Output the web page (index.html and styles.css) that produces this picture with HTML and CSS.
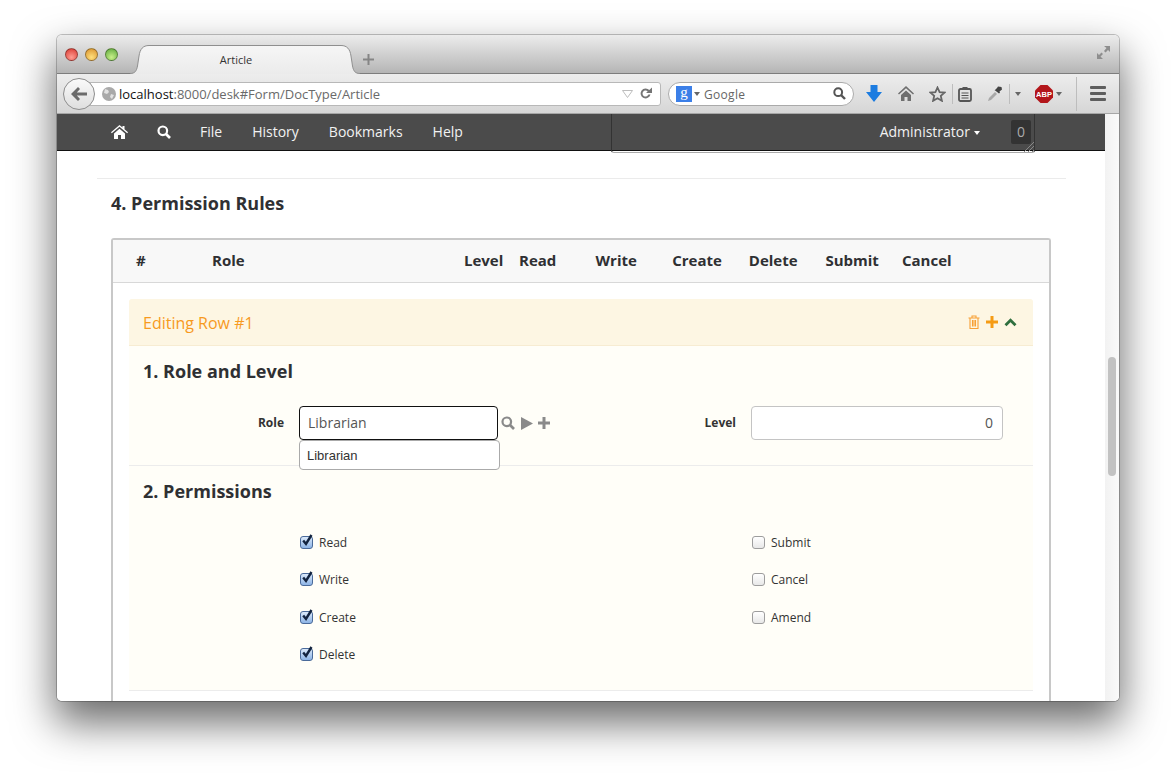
FILE: index.html

```html
<!DOCTYPE html>
<html lang="en">
<head>
    <meta charset="UTF-8">
    <title>Article</title>
    <link rel="stylesheet" href="styles.css">
</head>
<body>
    <div class="window">
        <div class="titlebar">
            <div class="lights">
                <span class="light red"></span>
                <span class="light yellow"></span>
                <span class="light green"></span>
            </div>
            <div class="tab">
                <svg class="tab-shape" width="230" height="29" viewBox="0 0 230 29">
                    <defs><linearGradient id="tabfill" x1="0" y1="0" x2="0" y2="1"><stop offset="0" stop-color="#f6f6f6"/><stop offset="1" stop-color="#ebebeb"/></linearGradient></defs>
                    <path d="M0 28.500C5 28.500 6.500 26 7.500 21L9 11C10 4 13 .5 19 .5H211C217 .5 220 4 221 11L222.500 21C223.500 26 225 28.500 230 28.500V29H0z" fill="url(#tabfill)"/>
                    <path d="M0 28.500C5 28.500 6.500 26 7.500 21L9 11C10 4 13 .5 19 .5H211C217 .5 220 4 221 11L222.500 21C223.500 26 225 28.500 230 28.500" fill="none" stroke="#8f8f8f"/>
                </svg>
                <span class="tab-title">Article</span>
            </div>
            <svg class="new-tab" width="11" height="11" viewBox="0 0 11 11"><path d="M4.500 0h2v4.500h4.500v2h-4.500v4.500h-2v-4.500h-4.500v-2h4.500z" fill="#858585"/></svg>
            <svg class="fullscreen" width="15" height="15" viewBox="0 0 15 15"><path d="M8 1h6v6l-2-2-2.500 2.500-1.500-1.500L10.500 3zM7 14H1V8l2 2 2.500-2.500L7 9l-2.500 2.500z" fill="#8e8e8e"/></svg>
        </div>

        <div class="toolbar">
            <div class="back">
                <svg width="18" height="16" viewBox="0 0 18 16"><path d="M8 1l2 2-3.200 3.400H17v3.200H6.800L10 13l-2 2-7-7z" fill="#6b6b6b"/></svg>
            </div>
            <div class="urlbar">
                <svg class="globe" width="14" height="14" viewBox="0 0 14 14"><circle cx="7" cy="7" r="7" fill="#a9a9a9"/><path d="M3 2l3 1 1 2-2 2-3-1zM9 7l3 1-2 4-2-2z" fill="#e2e2e2"/></svg>
                <span class="url"><b>localhost</b>:8000/desk#Form/DocType/Article</span>
                <svg class="url-drop" width="11" height="8" viewBox="0 0 11 8"><path d="M.5.500h10L5.500 7.500z" fill="none" stroke="#bdbdbd"/></svg>
                <svg class="reload" width="13" height="13" viewBox="0 0 13 13"><path d="M10.300 3A5 5 0 1 0 11.500 7.500H9.400A3 3 0 1 1 8.700 4.400L7 6h6V.500z" fill="#757575"/></svg>
            </div>
            <div class="searchbar">
                <span class="g-logo">g</span>
                <span class="caret grey"></span>
                <span class="search-text">Google</span>
                <svg width="13" height="13" viewBox="0 0 13 13"><circle cx="5.200" cy="5.200" r="3.900" fill="none" stroke="#555" stroke-width="2"/><path d="M8 8l4 4" stroke="#555" stroke-width="2.400"/></svg>
            </div>
            <svg class="tool-download" width="16" height="17" viewBox="0 0 16 17"><path d="M4.500 0h7v7H16l-8 10L0 7h4.500z" fill="#1c7ce0"/></svg>
            <svg class="tool-home" width="16" height="15" viewBox="0 0 16 15"><path d="M8 0l8 7.500-1 1L8 2.200 1 8.500l-1-1zM3 9l5-4.500L13 9v6H9.500v-4h-3v4H3z" fill="#6f6f6f"/></svg>
            <svg class="tool-star" width="17" height="16" viewBox="0 0 17 16"><path d="M8.500 1.500l2.100 4.600 4.900.5-3.700 3.300 1.100 4.900-4.400-2.600-4.400 2.600 1.100-4.900L1.500 6.600l4.900-.5z" fill="none" stroke="#666" stroke-width="1.800"/></svg>
            <span class="tool-sep"></span>
            <svg class="tool-clip" width="14" height="16" viewBox="0 0 14 16"><rect x="1" y="3" width="12" height="12" rx="1.500" fill="none" stroke="#555" stroke-width="1.800"/><rect x="4.500" y="1" width="5" height="3" fill="#555"/><path d="M3.500 7h7M3.500 9.500h7M3.500 12h7" stroke="#555" stroke-width="1.200"/></svg>
            <svg class="tool-dropper" width="16" height="16" viewBox="0 0 16 16"><path d="M1 15l1-3 6-6 2 2-6 6z" fill="#a8a8a8"/><path d="M8 4l2-2 1-1.500L14.500 1l.5 2.500-2.500 2 .5 1-1 1-4.500-3.500z" fill="#444"/></svg>
            <span class="tool-sep short"></span>
            <span class="caret grey tool-caret"></span>
            <svg class="tool-abp" width="18" height="18" viewBox="0 0 18 18"><path d="M5.500 0h7L18 5.500v7L12.500 18h-7L0 12.500v-7z" fill="#b3161b"/><text x="9" y="11.800" class="abp-text" text-anchor="middle">ABP</text></svg>
            <span class="caret grey abp-caret"></span>
            <span class="tool-sep tall"></span>
            <div class="menu-btn"><span></span><span></span><span></span></div>
        </div>

        <div class="viewport">
            <div class="page">
                <div class="navbar">
                    <svg class="nav-home" width="17" height="14" viewBox="0 0 17 14"><path d="M8.500 0l3 2.600V1h2v3.300L17 7.300l-.8.900L8.500 1.700.8 8.200 0 7.300zM3 8.500l5.500-4.700L14 8.500V14h-4V10H7v4H3z" fill="#fff"/></svg>
                    <svg class="nav-search" width="14" height="14" viewBox="0 0 14 14"><circle cx="5.800" cy="5.800" r="4.300" fill="none" stroke="#fff" stroke-width="2.200"/><path d="M9 9l4 4" stroke="#fff" stroke-width="2.600"/></svg>
                    <span class="nav-link first">File</span>
                    <span class="nav-link">History</span>
                    <span class="nav-link">Bookmarks</span>
                    <span class="nav-link">Help</span>
                    <span class="nav-user">Administrator<span class="caret white"></span></span>
                    <span class="nav-badge">0</span>
                    <div class="nav-textarea">
                        <svg class="grip" width="11" height="11" viewBox="0 0 11 11"><path d="M1 11L11 1M5 11l6-6M9 11l2-2" stroke="#888" stroke-width="1"/></svg>
                    </div>
                </div>

                <div class="content">
                    <div class="section-line"></div>
                    <h3 class="section-title">4. Permission Rules</h3>
                    <div class="grid-box">
                        <div class="grid-head">
                            <span class="col-no">#</span>
                            <span class="col-role">Role</span>
                            <span class="col-level">Level</span>
                            <span class="col-perm">Read</span>
                            <span class="col-perm">Write</span>
                            <span class="col-perm">Create</span>
                            <span class="col-perm">Delete</span>
                            <span class="col-perm">Submit</span>
                            <span class="col-perm">Cancel</span>
                        </div>
                        <div class="edit-panel">
                            <div class="edit-head">
                                <span class="edit-title">Editing Row #1</span>
                                <svg width="12" height="14" viewBox="0 0 12 14"><path d="M.5 3h11M4 3V1h4v2M2 3v10.500h8V3M4.500 5v6.500M6 5v6.500M7.500 5v6.500" fill="none" stroke="#f7a035" stroke-width="1.100"/></svg>
                                <svg class="edit-plus" width="12" height="12" viewBox="0 0 12 12"><path d="M4.500 0h3v4.500H12v3H7.500V12h-3V7.500H0v-3h4.500z" fill="#f59b14"/></svg>
                                <svg width="13" height="9" viewBox="0 0 13 9"><path d="M1.500 7.300L6.500 2.300l5 5" fill="none" stroke="#2f6f3e" stroke-width="2.800"/></svg>
                            </div>
                            <div class="edit-section">
                                <h4 class="edit-heading">1. Role and Level</h4>
                                <div class="form-cols role-row">
                                    <div class="field">
                                        <label class="field-label">Role</label>
                                        <div class="link-input">
                                            <input class="text-input focused" type="text" value="Librarian">
                                            <ul class="suggest"><li>Librarian</li></ul>
                                        </div>
                                        <svg class="link-search" width="14" height="14" viewBox="0 0 14 14"><circle cx="5.800" cy="5.800" r="4.300" fill="none" stroke="#8a8a8a" stroke-width="2.200"/><path d="M9 9l4 4" stroke="#8a8a8a" stroke-width="2.600"/></svg>
                                        <svg class="link-open" width="12" height="13" viewBox="0 0 12 13"><path d="M0 0l12 6.500L0 13z" fill="#8a8a8a"/></svg>
                                        <svg class="link-add" width="12" height="12" viewBox="0 0 12 12"><path d="M4.500 0h3v4.500H12v3H7.500V12h-3V7.500H0v-3h4.500z" fill="#8a8a8a"/></svg>
                                    </div>
                                    <div class="field">
                                        <label class="field-label">Level</label>
                                        <input class="text-input level" type="text" value="0">
                                    </div>
                                </div>
                            </div>
                            <div class="edit-section perms">
                                <h4 class="edit-heading">2. Permissions</h4>
                                <div class="form-cols">
                                    <div class="check-col">
                                        <div class="check-row"><span class="box on"><svg width="14" height="14" viewBox="0 0 14 14"><path d="M3.200 6.500l2.800 3.500L11.500 1" fill="none" stroke="#12233f" stroke-width="2.400"/></svg></span>Read</div>
                                        <div class="check-row"><span class="box on"><svg width="14" height="14" viewBox="0 0 14 14"><path d="M3.200 6.500l2.800 3.500L11.500 1" fill="none" stroke="#12233f" stroke-width="2.400"/></svg></span>Write</div>
                                        <div class="check-row"><span class="box on"><svg width="14" height="14" viewBox="0 0 14 14"><path d="M3.200 6.500l2.800 3.500L11.500 1" fill="none" stroke="#12233f" stroke-width="2.400"/></svg></span>Create</div>
                                        <div class="check-row"><span class="box on"><svg width="14" height="14" viewBox="0 0 14 14"><path d="M3.200 6.500l2.800 3.500L11.500 1" fill="none" stroke="#12233f" stroke-width="2.400"/></svg></span>Delete</div>
                                    </div>
                                    <div class="check-col">
                                        <div class="check-row"><span class="box"></span>Submit</div>
                                        <div class="check-row"><span class="box"></span>Cancel</div>
                                        <div class="check-row"><span class="box"></span>Amend</div>
                                    </div>
                                </div>
                            </div>
                        </div>
                    </div>
                </div>
            </div>
            <div class="scrollbar"><div class="thumb"></div></div>
        </div>
    </div>
</body>
</html>
```

FILE: styles.css

```css
html, body {
    margin: 0;
    padding: 0;
    height: 780px;
    overflow: hidden;
    background-color: #fff;
}

body {
    font-family: "Open Sans", Arial, sans-serif;
    color: #36393d;
    padding-top: 35px;
    padding-left: 57px;
    box-sizing: border-box;
}

.window {
    width: 1062px;
    height: 666px;
    border-radius: 5px;
    overflow: hidden;
    display: flex;
    flex-direction: column;
    box-shadow: 0 20px 42px 2px rgba(0, 0, 0, 0.58), 0 0 0 1px rgba(0, 0, 0, 0.22);
}

/* browser chrome */
.titlebar {
    height: 39px;
    flex: none;
    box-sizing: border-box;
    background: linear-gradient(#ececec, #b5b5b5);
    border-bottom: 1px solid #7d7d7d;
    display: flex;
    align-items: flex-end;
}

.lights {
    display: flex;
    gap: 7px;
    align-self: flex-start;
    margin: 13px 0 0 8px;
}

.light {
    width: 13px;
    height: 13px;
    border-radius: 50%;
    box-sizing: border-box;
    border: 1px solid rgba(0, 0, 0, 0.35);
}

.red { background: radial-gradient(circle at 50% 75%, #ff9d92, #d9362e); }
.yellow { background: radial-gradient(circle at 50% 75%, #ffe07c, #d9902a); }
.green { background: radial-gradient(circle at 50% 75%, #c9f08a, #5ba73a); }

.tab {
    width: 230px;
    height: 29px;
    margin-left: 12px;
    margin-bottom: -1px;
    padding-right: 18px;
    box-sizing: border-box;
    position: relative;
    text-align: center;
    font-size: 11px;
    line-height: 30px;
    color: #333;
}

.tab-shape {
    position: absolute;
    left: 0;
    top: 0;
}

.tab-title {
    position: relative;
}

.new-tab {
    margin: 0 0 8px 3px;
}

.fullscreen {
    margin: 0 8px 13px auto;
}

.toolbar {
    height: 40px;
    flex: none;
    box-sizing: border-box;
    padding-left: 6px;
    background: linear-gradient(#ededed, #d6d6d6);
    border-bottom: 1px solid #a6a6a6;
    display: flex;
    align-items: center;
}

.back {
    width: 32px;
    height: 32px;
    box-sizing: border-box;
    border-radius: 50%;
    border: 1px solid #8d8d8d;
    background: linear-gradient(#fafafa, #dedede);
    display: flex;
    align-items: center;
    justify-content: center;
    position: relative;
    z-index: 1;
}

.urlbar {
    width: 581px;
    height: 24px;
    margin-left: -15px;
    padding: 0 8px 0 21px;
    box-sizing: border-box;
    background-color: #fff;
    border: 1px solid #b8b8b8;
    border-radius: 0 3px 3px 0;
    display: flex;
    align-items: center;
}

.globe {
    flex: none;
}

.url {
    font-size: 13px;
    margin-left: 3px;
    color: #6a6a6a;
    flex: 1;
    white-space: nowrap;
}

.url b {
    font-weight: 400;
    color: #111;
}

.url-drop {
    margin-right: 6px;
}

.searchbar {
    width: 186px;
    height: 24px;
    margin-left: 7px;
    padding: 0 7px;
    box-sizing: border-box;
    background-color: #fff;
    border: 1px solid #aaa;
    border-radius: 12px;
    display: flex;
    align-items: center;
    flex: none;
}

.g-logo {
    width: 16px;
    height: 16px;
    background-color: #3b7fe8;
    color: #fff;
    font-family: "Liberation Serif", serif;
    font-size: 15px;
    line-height: 13px;
    text-align: center;
}

.caret {
    display: inline-block;
    width: 0;
    height: 0;
    border-left: 3.500px solid transparent;
    border-right: 3.500px solid transparent;
    border-top: 4px solid #666;
}

.caret.grey {
    margin-left: 2px;
    flex: none;
}

.caret.white {
    border-top-color: #fff;
    margin-left: 4px;
    vertical-align: middle;
}

.search-text {
    font-size: 12px;
    color: #666;
    margin: 2px 0 0 4px;
    flex: 1;
    letter-spacing: 0.3px;
}

.tool-download { margin-left: 12px; flex: none; }
.tool-home { margin-left: 16px; flex: none; }
.tool-star { margin-left: 15px; flex: none; }

.tool-sep {
    width: 1px;
    height: 20px;
    background-color: #bdbdbd;
    margin-left: 6px;
    flex: none;
}

.tool-clip { margin-left: 5px; flex: none; }
.tool-dropper { margin-left: 15px; flex: none; }
.tool-sep.short { margin-left: 6px; }
.caret.tool-caret { margin-left: 5px; }
.tool-abp { margin-left: 14px; flex: none; }
.caret.abp-caret { margin-left: 3px; }
.tool-sep.tall { height: 34px; margin-left: 14px; }

.abp-text {
    font-family: "Liberation Sans", sans-serif;
    font-size: 7.500px;
    font-weight: 700;
    fill: #fff;
}

.menu-btn {
    width: 16px;
    margin-left: 13px;
    display: flex;
    flex-direction: column;
    gap: 3px;
    flex: none;
}

.menu-btn span {
    height: 3px;
    border-radius: 1px;
    background-color: #5e5e5e;
}

/* page */
.viewport {
    flex: 1;
    min-height: 0;
    display: flex;
    background-color: #fff;
}

.page {
    width: 1048px;
    flex: none;
    overflow: hidden;
}

.scrollbar {
    flex: 1;
    background: linear-gradient(90deg, #f2f2f2, #fafafa);
    padding: 243px 3px 0;
    box-sizing: border-box;
}

.thumb {
    height: 119px;
    border-radius: 4px;
    background-color: #c2c2c2;
}

.navbar {
    height: 37px;
    padding-bottom: 1px;
    box-sizing: border-box;
    background-color: #4b4b4b;
    border-bottom: 1px solid #111;
    display: flex;
    align-items: center;
    position: relative;
    color: #fff;
    font-size: 14px;
}

.nav-home { margin-left: 54px; flex: none; }
.nav-search { margin-left: 29px; flex: none; }

.nav-link {
    margin-left: 30px;
    color: #f2f2f2;
}

.nav-link.first { margin-left: 29px; }

.nav-user {
    margin-left: auto;
    color: #f2f2f2;
}

.nav-badge {
    width: 20px;
    height: 24px;
    margin: 0 74px 0 31px;
    background-color: #333;
    border-radius: 2px;
    color: #aaa;
    text-align: center;
    line-height: 24px;
}

.nav-textarea {
    position: absolute;
    left: 554px;
    top: 0;
    width: 424px;
    height: 39px;
    box-sizing: border-box;
    border: 1px solid #333;
    border-top: none;
    border-bottom-color: #aaa;
    border-radius: 0 0 3px 3px;
}

.grip {
    position: absolute;
    right: 0;
    bottom: 0;
}

.content {
    padding: 27px 39px 0 40px;
}

.section-line {
    height: 1px;
    background-color: #ebebeb;
}

.section-title {
    margin: 12px 0 0 14px;
    font-size: 18px;
    line-height: 24px;
    font-weight: 700;
    color: #2f3033;
}

.grid-box {
    margin: 23px 15px 0 14px;
    border: 2px solid #c8c8c8;
    border-bottom: none;
    border-radius: 3px 3px 0 0;
    height: 480px;
    box-sizing: border-box;
}

.grid-head {
    height: 43px;
    box-sizing: border-box;
    background-color: #f8f8f8;
    border-bottom: 1px solid #d8d8d8;
    display: flex;
    align-items: center;
    padding-left: 23px;
    padding-bottom: 2px;
    font-size: 15px;
    font-weight: 700;
    color: #2f3033;
}

.grid-head span { flex: none; }
.col-no { width: 76px; }
.col-role { width: 252px; }
.col-level { width: 55px; }
.col-perm { width: 76.600px; }

.edit-panel {
    margin: 16px 16px 0;
    background-color: #fffef8;
    border-radius: 3px 3px 0 0;
}

.edit-head {
    height: 47px;
    box-sizing: border-box;
    padding: 0 16px 0 14px;
    background-color: #fdf6e3;
    border-bottom: 1px solid #f7ecd2;
    border-radius: 3px 3px 0 0;
    display: flex;
    align-items: center;
}

.edit-title {
    font-size: 16px;
    color: #f79a1e;
    flex: 1;
    margin-top: 2px;
}

.edit-plus {
    margin: 0 6px;
}

.edit-section {
    height: 120px;
    box-sizing: border-box;
    border-bottom: 1px solid #ececec;
}

.edit-section.perms {
    height: 225px;
}

.edit-heading {
    margin: 0;
    padding: 12px 0 0 14px;
    font-size: 18px;
    line-height: 27px;
    font-weight: 700;
    color: #2f3033;
}

.form-cols {
    display: grid;
    grid-template-columns: 452px 452px;
}

.role-row {
    margin-top: 21px;
}

.field {
    display: flex;
    align-items: center;
}

.field-label {
    width: 155px;
    margin: 0 15px 2px 0;
    text-align: right;
    font-size: 12px;
    font-weight: 700;
    color: #333;
}

.link-input {
    position: relative;
    width: 199px;
}

.text-input {
    display: block;
    height: 34px;
    padding: 0 8px 2px;
    box-sizing: border-box;
    border: 1px solid #c4c4c4;
    border-radius: 4px;
    background-color: #fff;
    font-family: "Open Sans", Arial, sans-serif;
    font-size: 14px;
    color: #555;
    outline: none;
}

.text-input.focused {
    width: 100%;
    border-color: #111;
}

.text-input.level {
    width: 252px;
    text-align: right;
    padding-right: 9px;
}

.suggest {
    position: absolute;
    left: 0;
    top: 34px;
    width: 201px;
    height: 30px;
    margin: 0;
    padding: 0 7px;
    box-sizing: border-box;
    list-style: none;
    background-color: #fff;
    border: 1px solid #aaa;
    border-radius: 4px;
    font-family: "Liberation Sans", Arial, sans-serif;
    font-size: 13px;
    line-height: 29px;
    color: #333;
}

.link-search { margin-left: 3px; flex: none; }
.link-open { margin-left: 6px; flex: none; }
.link-add { margin-left: 5px; flex: none; }

.perms .form-cols {
    margin-top: 18.500px;
}

.check-col {
    padding-left: 171px;
}

.check-row {
    height: 37.500px;
    display: flex;
    align-items: center;
    font-size: 12px;
    color: #333;
}

.box {
    width: 13px;
    height: 13px;
    margin-right: 6px;
    box-sizing: border-box;
    border: 1px solid #9d9d9d;
    border-radius: 3px;
    background: linear-gradient(#fff, #e8e8e8);
    position: relative;
    flex: none;
}

.box.on {
    border-color: #4a6a9a;
    background: linear-gradient(#dbe9fa, #8db4e6);
}

.box svg {
    position: absolute;
    left: -1px;
    top: -3px;
}
```
